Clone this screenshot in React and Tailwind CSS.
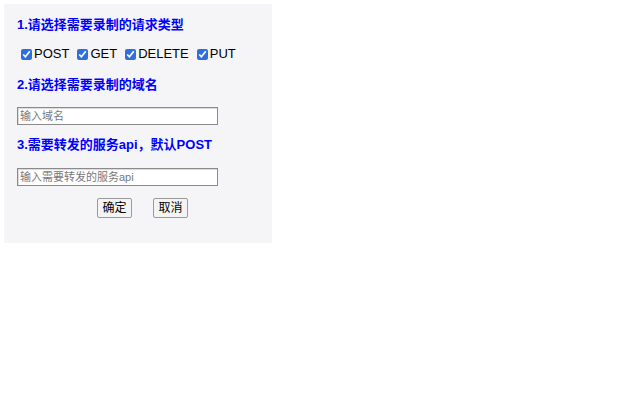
import { useState } from 'react'

const methods = ['POST', 'GET', 'DELETE', 'PUT']

export default function App() {
    const [checked, setChecked] = useState({ POST: true, GET: true, DELETE: true, PUT: true })
    const [domain, setDomain] = useState('')
    const [api, setApi] = useState('')

    const toggle = (m) => setChecked(prev => ({ ...prev, [m]: !prev[m] }))

    return (
        <div className="w-[640px] h-[400px] bg-white font-['Liberation_Sans','Noto_Sans_CJK_SC',sans-serif]">
            <div className="ml-[4px] pt-[4px]">
                <div className="w-[268px] h-[239px] bg-[#f5f5f7] px-[13px] pt-[11px]">

                    <h3 className="text-[13px] leading-[20px] font-bold text-[#0000ff]">1.请选择需要录制的请求类型</h3>

                    {/* 请求类型 */}
                    <div className="flex items-center mt-[9px] h-[20px] pl-[4px]">
                        {methods.map(m => (
                            <label key={m} className="flex items-center mr-[8px] text-[13px] text-black">
                                <input
                                    type="checkbox"
                                    checked={checked[m]}
                                    onChange={() => toggle(m)}
                                    className="w-[11px] h-[11px] mr-[2px] accent-[#2d6fe0]"
                                />
                                {m}
                            </label>
                        ))}
                    </div>

                    <h3 className="text-[13px] leading-[20px] font-bold text-[#0000ff] mt-[11px]">2.请选择需要录制的域名</h3>

                    <input
                        value={domain}
                        onChange={e => setDomain(e.target.value)}
                        placeholder="输入域名"
                        className="block mt-[12px] w-[201px] h-[18px] border border-[#8a8a8a] bg-white px-[2px] text-[11px] text-black placeholder:text-[#777] shadow-[inset_1px_1px_1px_rgba(0,0,0,0.15)] outline-none"
                    />

                    <h3 className="text-[13px] leading-[20px] font-bold text-[#0000ff] mt-[10px]">3.需要转发的服务api，默认POST</h3>

                    <input
                        value={api}
                        onChange={e => setApi(e.target.value)}
                        placeholder="输入需要转发的服务api"
                        className="block mt-[13px] w-[201px] h-[18px] border border-[#8a8a8a] bg-white px-[2px] text-[11px] text-black placeholder:text-[#777] shadow-[inset_1px_1px_1px_rgba(0,0,0,0.15)] outline-none"
                    />

                    <div className="flex justify-center gap-[21px] mt-[12px] pl-[9px]">
                        <button className="w-[35px] h-[20px] border border-[#9a9a9a] rounded-[2px] bg-[#f4f4f4] text-[12px] text-black leading-none">确定</button>
                        <button className="w-[35px] h-[20px] border border-[#9a9a9a] rounded-[2px] bg-[#f4f4f4] text-[12px] text-black leading-none">取消</button>
                    </div>
                </div>
            </div>
        </div>
    )
}
